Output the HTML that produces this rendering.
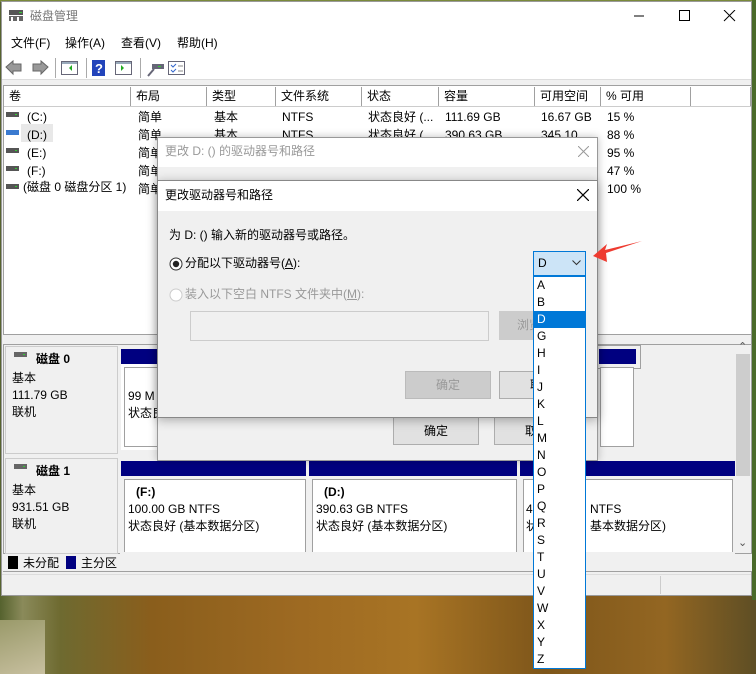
<!DOCTYPE html>
<html><head><meta charset="utf-8"><style>
*{box-sizing:border-box;margin:0;padding:0}
body{width:756px;height:674px;overflow:hidden;position:relative;font-family:"Liberation Sans","Noto Sans CJK SC",sans-serif;font-size:12px;color:#000;background:linear-gradient(90deg,#55622e 0,#8a8a5a 3%,#6e6a30 8%,#8a5e1c 20%,#9e6a22 40%,#a87424 55%,#7e561a 72%,#936622 88%,#5e4e24 100%)}
.a{position:absolute}
.t{position:absolute;white-space:nowrap;line-height:14px}
.hd{position:absolute;top:87px;height:20px;border-right:1px solid #a0a0a0;padding-left:5px;line-height:19px;background:#fff}
.blue{background:#000080}
.part{position:absolute;background:#fff;border:1px solid #a0a0a0;outline:3px solid #fff}
.btn{position:absolute;border:1px solid #adadad;background:#e1e1e1;text-align:center;line-height:26px}
.li{height:17px;line-height:17px;padding-left:3px;font-size:12px}
</style></head><body>
<div class="a" style="left:0;top:620px;width:45px;height:54px;background:linear-gradient(160deg,#9a9a6a,#c8c0a0)"></div>
<div class="a" style="left:0;top:0;width:756px;height:2px;background:#7a8a3a"></div>
<div class="a" style="left:752px;top:0;width:4px;height:600px;background:#4a6a2a"></div>
<div class="a" style="left:1px;top:1px;width:751px;height:595px;background:#f0f0f0;border:1px solid #9a9a9a"></div>
<div class="a" style="left:2px;top:2px;width:749px;height:30px;background:#fff"></div>
<svg class="a" style="left:8px;top:9px" width="16" height="14"><rect x="1" y="1" width="14" height="5" fill="#555"/><rect x="1" y="7" width="14" height="5" fill="#666"/><rect x="11" y="3" width="3" height="1" fill="#3c3"/><rect x="3" y="8" width="2" height="4" fill="#fff"/><rect x="9" y="8" width="2" height="4" fill="#fff"/></svg>
<div class="t" style="left:30px;top:9px;color:#777;font-size:12px">磁盘管理</div>
<svg class="a" style="left:634px;top:10px" width="110" height="12"><line x1="0" y1="6" x2="10" y2="6" stroke="#000"/><rect x="45.5" y="0.5" width="10" height="10" fill="none" stroke="#000"/><path d="M90 0L101 11M101 0L90 11" stroke="#000"/></svg>
<div class="a" style="left:2px;top:32px;width:749px;height:23px;background:#fff"></div>
<div class="t" style="left:11px;top:36px">文件(F)</div>
<div class="t" style="left:65px;top:36px">操作(A)</div>
<div class="t" style="left:121px;top:36px">查看(V)</div>
<div class="t" style="left:177px;top:36px">帮助(H)</div>
<div class="a" style="left:2px;top:55px;width:749px;height:25px;background:#fff;border-bottom:1px solid #ddd"></div>
<svg class="a" style="left:4px;top:58px" width="190" height="20">
<path d="M2 9L9 3V6H17V13H9V16Z" fill="#999" stroke="#666"/><path d="M44 9L37 3V6H29V13H37V16Z" fill="#999" stroke="#666"/>
<line x1="51.5" y1="0" x2="51.5" y2="20" stroke="#aaa"/>
<rect x="57.5" y="3.5" width="16" height="13" fill="#fff" stroke="#667"/><rect x="58" y="4" width="15" height="2" fill="#9ab"/><path d="M65 10l3-3v6z" fill="#2a2"/>
<line x1="82.5" y1="0" x2="82.5" y2="20" stroke="#aaa"/>
<rect x="88" y="2" width="13" height="16" fill="#2244bb"/><text x="91" y="15" fill="#fff" font-size="13" font-weight="bold" font-family="Liberation Sans">?</text>
<rect x="111.5" y="3.5" width="16" height="13" fill="#fff" stroke="#667"/><rect x="112" y="4" width="15" height="2" fill="#9ab"/><path d="M117 7l3 3-3 3z" fill="#2a2"/>
<line x1="136.5" y1="0" x2="136.5" y2="20" stroke="#aaa"/>
<rect x="148" y="6" width="12" height="5" fill="#667"/><line x1="150" y1="11" x2="144" y2="18" stroke="#667" stroke-width="2"/><rect x="154" y="8" width="3" height="1" fill="#3c3"/>
<rect x="164.5" y="3.5" width="16" height="13" fill="#fff" stroke="#667"/><path d="M167 7l2 2 3-3M167 12l2 2 3-3" stroke="#36c" fill="none"/><line x1="174" y1="8" x2="179" y2="8" stroke="#888"/><line x1="174" y1="13" x2="179" y2="13" stroke="#888"/>
</svg>
<div class="a" style="left:3px;top:85px;width:749px;height:250px;background:#fff;border:1px solid #a0a0a0"></div>
<div class="hd" style="left:4px;width:127px">卷</div>
<div class="hd" style="left:131px;width:76px">布局</div>
<div class="hd" style="left:207px;width:69px">类型</div>
<div class="hd" style="left:276px;width:86px">文件系统</div>
<div class="hd" style="left:362px;width:77px">状态</div>
<div class="hd" style="left:439px;width:96px">容量</div>
<div class="hd" style="left:535px;width:66px">可用空间</div>
<div class="hd" style="left:601px;width:90px">% 可用</div>
<div class="hd" style="left:691px;width:60px"></div>
<div class="a" style="left:4px;top:106px;width:747px;height:1px;background:#ccc"></div>
<div class="a" style="left:21px;top:124px;width:32px;height:18px;background:#e8e8e8"></div>
<svg class="a" style="left:6px;top:110px" width="14" height="80"><g fill="#555"><rect y="2" width="13" height="5"/><rect y="38" width="13" height="5"/><rect y="56" width="13" height="5"/><rect y="74" width="13" height="5"/></g><rect y="20" width="13" height="5" fill="#3a7ad0"/><g fill="#3c3"><rect x="9" y="4" width="2" height="1"/><rect x="9" y="40" width="2" height="1"/><rect x="9" y="58" width="2" height="1"/><rect x="9" y="76" width="2" height="1"/></g></svg>
<div class="t" style="left:27px;top:108px;line-height:18px">(C:)<br>(D:)<br>(E:)<br>(F:)</div>
<div class="t" style="left:23px;top:180px;line-height:14px">(磁盘 0 磁盘分区 1)</div>
<div class="t" style="left:138px;top:108px;line-height:18px">简单<br>简单<br>简单<br>简单<br>简单</div>
<div class="t" style="left:214px;top:108px;line-height:18px">基本<br>基本</div>
<div class="t" style="left:282px;top:108px;line-height:18px">NTFS<br>NTFS</div>
<div class="t" style="left:368px;top:108px;line-height:18px">状态良好 (...<br>状态良好 (...</div>
<div class="t" style="left:445px;top:108px;line-height:18px">111.69 GB<br>390.63 GB</div>
<div class="t" style="left:541px;top:108px;line-height:18px">16.67 GB<br>345.10 ...</div>
<div class="t" style="left:607px;top:108px;line-height:18px">15 %<br>88 %<br>95 %<br>47 %<br>100 %</div>
<div class="a" style="left:3px;top:344px;width:749px;height:210px;background:#f0f0f0;border:1px solid #a0a0a0"></div>
<div class="a" style="left:5px;top:346px;width:113px;height:108px;border:1px solid #ccc;background:#f0f0f0"></div>
<div class="a" style="left:5px;top:458px;width:113px;height:96px;border:1px solid #ccc;background:#f0f0f0"></div>
<svg class="a" style="left:14px;top:352px" width="14" height="130"><rect y="0" width="13" height="5" fill="#666"/><rect x="9" y="2" width="2" height="1" fill="#3c3"/><rect y="112" width="13" height="5" fill="#666"/><rect x="9" y="114" width="2" height="1" fill="#3c3"/></svg>
<div class="t" style="left:36px;top:352px;font-weight:bold">磁盘 0</div>
<div class="t" style="left:12px;top:370px;line-height:17px">基本<br>111.79 GB<br>联机</div>
<div class="t" style="left:36px;top:464px;font-weight:bold">磁盘 1</div>
<div class="t" style="left:12px;top:482px;line-height:17px">基本<br>931.51 GB<br>联机</div>
<div class="a blue" style="left:121px;top:349px;width:474px;height:15px"></div>
<div class="part" style="left:124px;top:367px;width:470px;height:80px"></div>
<div class="t" style="left:128px;top:388px;line-height:17px">99 M<br>状态良</div>
<div class="a" style="left:597px;top:345px;width:44px;height:24px;border:1px solid #a0a0a0;background:#f0f0f0"></div>
<div class="a blue" style="left:599px;top:349px;width:37px;height:15px"></div>
<div class="part" style="left:600px;top:367px;width:34px;height:80px;outline:none"></div>
<div class="a blue" style="left:121px;top:461px;width:185px;height:15px"></div>
<div class="a blue" style="left:309px;top:461px;width:208px;height:15px"></div>
<div class="a blue" style="left:520px;top:461px;width:215px;height:15px"></div>
<div class="part" style="left:124px;top:479px;width:182px;height:80px;outline:none;border-bottom:none"></div>
<div class="part" style="left:312px;top:479px;width:205px;height:80px;outline:none;border-bottom:none"></div>
<div class="part" style="left:523px;top:479px;width:210px;height:80px;outline:none;border-bottom:none"></div>
<div class="a" style="left:120px;top:552px;width:615px;height:2px;background:#f0f0f0"></div>
<div class="t" style="left:136px;top:485px;font-weight:bold">(F:)</div>
<div class="t" style="left:128px;top:501px;line-height:17px">100.00 GB NTFS<br>状态良好 (基本数据分区)</div>
<div class="t" style="left:324px;top:485px;font-weight:bold">(D:)</div>
<div class="t" style="left:316px;top:501px;line-height:17px">390.63 GB NTFS<br>状态良好 (基本数据分区)</div>
<div class="t" style="left:526px;top:501px;line-height:17px">4<br>状</div>
<div class="t" style="left:590px;top:501px;line-height:17px">NTFS<br>基本数据分区)</div>
<div class="a" style="left:735px;top:345px;width:16px;height:208px;background:#f0f0f0"></div>
<div class="a" style="left:736px;top:354px;width:14px;height:122px;background:#cdcdcd"></div>
<div class="t" style="left:738px;top:340px;font-size:11px;color:#555">⌃</div>
<div class="t" style="left:738px;top:536px;font-size:11px;color:#555">⌄</div>
<div class="a" style="left:3px;top:554px;width:749px;height:18px;background:#f0f0f0;border-bottom:1px solid #a0a0a0"></div>
<div class="a" style="left:8px;top:556px;width:10px;height:13px;background:#000"></div>
<div class="t" style="left:23px;top:556px">未分配</div>
<div class="a" style="left:66px;top:556px;width:10px;height:13px;background:#000080"></div>
<div class="t" style="left:81px;top:556px">主分区</div>
<div class="a" style="left:2px;top:574px;width:749px;height:21px;background:#f0f0f0;border-top:1px solid #ddd"></div>
<div class="a" style="left:660px;top:576px;width:1px;height:18px;background:#ccc"></div>
<div class="a" style="left:157px;top:137px;width:441px;height:324px;background:#f0f0f0;border:1px solid #999;box-shadow:0 0 8px rgba(0,0,0,.25)"></div>
<div class="a" style="left:158px;top:138px;width:439px;height:29px;background:#fff"></div>
<div class="t" style="left:165px;top:144px;color:#999">更改 D: () 的驱动器号和路径</div>
<svg class="a" style="left:578px;top:146px" width="11" height="11"><path d="M0 0L11 11M11 0L0 11" stroke="#999"/></svg>
<div class="btn" style="left:393px;top:417px;width:86px;height:28px">确定</div>
<div class="btn" style="left:494px;top:417px;width:60px;height:28px;text-align:left;padding-left:30px">取</div>
<div class="a" style="left:157px;top:180px;width:441px;height:238px;background:#f0f0f0;border:1px solid #888;box-shadow:0 2px 10px rgba(0,0,0,.3)"></div>
<div class="a" style="left:158px;top:181px;width:439px;height:30px;background:#fff"></div>
<div class="t" style="left:165px;top:188px">更改驱动器号和路径</div>
<svg class="a" style="left:577px;top:189px" width="12" height="12"><path d="M0 0L12 12M12 0L0 12" stroke="#000" stroke-width="1.2"/></svg>
<div class="t" style="left:169px;top:228px">为 D: () 输入新的驱动器号或路径。</div>
<svg class="a" style="left:169px;top:257px" width="14" height="14"><circle cx="7" cy="7" r="6" fill="#fff" stroke="#333"/><circle cx="7" cy="7" r="3.2" fill="#222"/></svg>
<div class="t" style="left:185px;top:256px">分配以下驱动器号(<u>A</u>):</div>
<svg class="a" style="left:169px;top:288px" width="14" height="14"><circle cx="7" cy="7" r="6" fill="#fff" stroke="#ccc"/></svg>
<div class="t" style="left:185px;top:287px;color:#999">装入以下空白 NTFS 文件夹中(<u>M</u>):</div>
<div class="a" style="left:190px;top:311px;width:299px;height:30px;border:1px solid #ccc;background:#f0f0f0"></div>
<div class="btn" style="left:499px;top:311px;width:50px;height:29px;border-color:#ccc;background:#ccc;color:#999;text-align:left;padding-left:17px">浏览</div>
<div class="btn" style="left:405px;top:371px;width:86px;height:28px;border-color:#bbb;background:#ccc;color:#999">确定</div>
<div class="btn" style="left:499px;top:371px;width:50px;height:28px;text-align:left;padding-left:30px">取</div>
<div class="a" style="left:533px;top:251px;width:53px;height:25px;background:#cce4f7;border:1px solid #0078d7"></div>
<div class="t" style="left:538px;top:256px;font-size:12px">D</div>
<svg class="a" style="left:572px;top:260px" width="9" height="6"><path d="M0.5 0.5L4.5 4.5L8.5 0.5" fill="none" stroke="#333"/></svg>
<div class="a" style="left:533px;top:276px;width:53px;height:393px;background:#fff;border:1px solid #0078d7">
<div class="li">A</div><div class="li">B</div><div class="li" style="background:#0078d7;color:#fff">D</div><div class="li">G</div><div class="li">H</div><div class="li">I</div><div class="li">J</div><div class="li">K</div><div class="li">L</div><div class="li">M</div><div class="li">N</div><div class="li">O</div><div class="li">P</div><div class="li">Q</div><div class="li">R</div><div class="li">S</div><div class="li">T</div><div class="li">U</div><div class="li">V</div><div class="li">W</div><div class="li">X</div><div class="li">Y</div><div class="li">Z</div>
</div>
<svg class="a" style="left:590px;top:238px" width="56" height="28"><path d="M3 18L17 6L15 12L52 3L16 15L17 24Z" fill="#ee3b30"/></svg>
</body></html>
